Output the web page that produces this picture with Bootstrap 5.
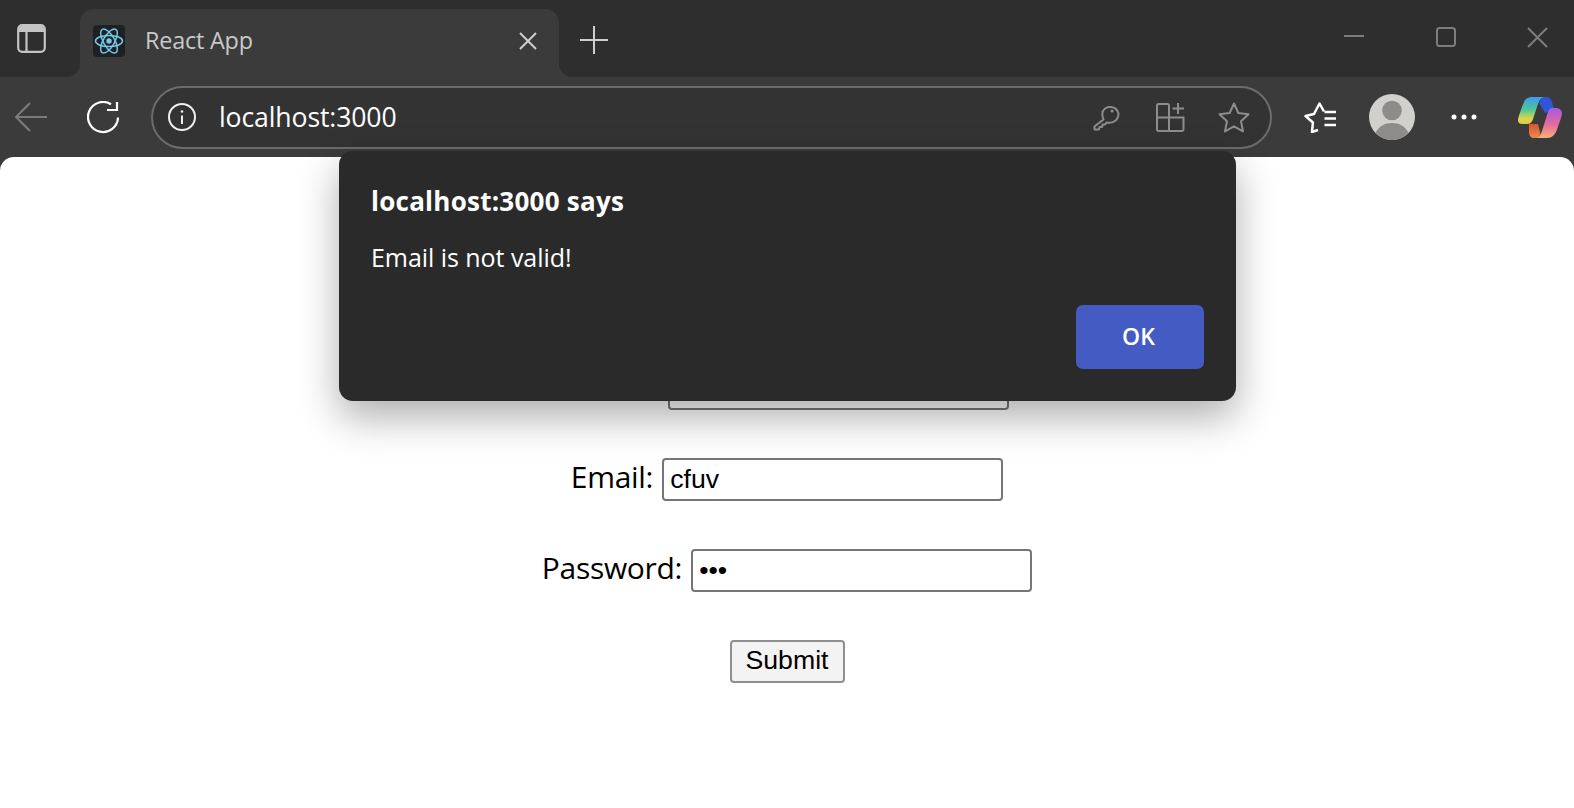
<!DOCTYPE html>
<html lang="en">
<head>
    <meta charset="UTF-8">
    <meta name="viewport" content="width=device-width, initial-scale=1.0">
    <title>React App</title>
    <link href="https://cdn.jsdelivr.net/npm/bootstrap@5.3.0/dist/css/bootstrap.min.css" rel="stylesheet">
    <style>
        html, body { height: 100%; overflow: hidden; }
        body { background: #3b3b3b; font-family: "Open Sans", "Noto Sans", sans-serif; }
        svg { display: block; flex: none; }

        .tab-strip { height: 77px; background: #2e2e2e; }
        .strip-panel { margin-left: 17px; margin-right: 34px; }
        .page-tab {
            position: relative; width: 479px; height: 68px; margin-top: 9px;
            padding: 0 22px 4px 13px;
            background: #3b3b3b; border-radius: 14px 14px 0 0;
        }
        .page-tab::before, .page-tab::after {
            content: ""; position: absolute; bottom: 0; width: 14px; height: 14px;
        }
        .page-tab::before { left: -14px; background: radial-gradient(circle at 0 0, transparent 14px, #3b3b3b 14.5px); }
        .page-tab::after { right: -14px; background: radial-gradient(circle at 100% 0, transparent 14px, #3b3b3b 14.5px); }
        .tab-favicon { width: 32px; height: 32px; border-radius: 4px; background: #1d2024; }
        .tab-title { margin-left: 20px; font-size: 23.4px; color: #c9c9c9; letter-spacing: -.2px; }
        .tab-plus { margin-left: 20px; padding-top: 2px; }
        .win-group { padding-top: 27px; }
        .win-min { margin-right: 72px; }
        .win-max { margin-right: 71px; }
        .win-close { margin-right: 26px; }

        .tool-strip { height: 80px; background: #3b3b3b; }
        .tool-back { margin-left: 14px; }
        .tool-reload { margin-left: 40px; }
        .url-bar {
            width: 1121px; height: 63px; margin-left: 32px; padding-left: 15px; padding-right: 20px;
            background: #333; border: 2px solid #6c6c6c; border-radius: 32px;
        }
        .url-text { margin-left: 23px; padding-top: 2px; font-size: 26.6px; color: #fff; letter-spacing: -.12px; }
        .url-apps { margin-left: 36px; margin-right: 33px; }
        .tool-favs { margin-left: 32px; }
        .tool-avatar { margin-left: 33px; }
        .tool-dots { margin-left: 36px; }
        .tool-copilot { margin-left: 41px; }

        .page-area {
            height: 651px; padding-top: 210px; background: #fff;
            border-radius: 14px 14px 0 0; color: #000;
        }
        .form-line { height: 43px; margin-bottom: 48px; }
        .form-label-text { margin-right: 9px; padding-bottom: 6px; font-size: 30px; line-height: 42px; letter-spacing: -.3px; }
        .form-label-name { letter-spacing: .3px; }
        .form-entry {
            width: 341px; height: 43px; padding: 0 6px; border: 2px solid #767676; border-radius: 4px;
            background: #fff; color: #000; font-family: "Liberation Sans", Arial, sans-serif; font-size: 26.67px;
            outline: none;
        }
        .form-submit {
            width: 115px; height: 43px; padding: 0 0 2px; border: 2px solid #8f8f8f; border-radius: 4px;
            background: #f3f3f3; color: #000; font-family: "Liberation Sans", Arial, sans-serif; font-size: 26.67px; line-height: 1;
        }

        .alert-box {
            position: absolute; left: 339px; top: 151px; width: 897px; height: 250px; padding: 32px;
            background: #2a2a2a; border-radius: 14px; color: #fff;
            box-shadow: 0 16px 40px rgba(0, 0, 0, .32);
        }
        .alert-title { margin-top: 2px; font-size: 26px; line-height: 32px; font-weight: 700; letter-spacing: .25px; }
        .alert-body { margin-top: 24px; font-size: 25px; line-height: 32px; letter-spacing: -.05px; }
        .alert-ok {
            width: 128px; height: 64px; padding: 0 3px 1px 0; border: 0; border-radius: 7px;
            background: #445bc4; color: #fff; font-size: 23px; font-weight: 600;
        }
    </style>
</head>
<body>
    <div class="tab-strip d-flex">
        <div class="strip-panel d-flex align-items-center">
            <svg width="29" height="29" viewBox="0 0 29 29" fill="none">
                <rect x="1.2" y="1.2" width="26.6" height="26.6" rx="4" stroke="#c4c4c4" stroke-width="2.2"/>
                <path d="M2 8V5a3 3 0 0 1 3-3h19a3 3 0 0 1 3 3v3z" fill="#c4c4c4"/>
                <path d="M9.5 8v19" stroke="#c4c4c4" stroke-width="2.2"/>
            </svg>
        </div>
        <div class="page-tab d-flex align-items-center">
            <div class="tab-favicon d-flex align-items-center justify-content-center">
                <svg width="30" height="30" viewBox="-15 -15 30 30" fill="none" stroke="#76c8e8" stroke-width="1.5">
                    <ellipse rx="13.5" ry="5.6"/>
                    <ellipse rx="13.5" ry="5.6" transform="rotate(60)"/>
                    <ellipse rx="13.5" ry="5.6" transform="rotate(120)"/>
                    <circle r="2.7" fill="#76c8e8" stroke="none"/>
                </svg>
            </div>
            <span class="tab-title">React App</span>
            <svg class="ms-auto" width="18" height="18" viewBox="0 0 18 18" stroke="#d0d0d0" stroke-width="2"><path d="M1 1l16 16M17 1L1 17"/></svg>
        </div>
        <div class="tab-plus d-flex align-items-center">
            <svg width="30" height="30" viewBox="0 0 30 30" stroke="#cfcfcf" stroke-width="2"><path d="M15 1v28M1 15h28"/></svg>
        </div>
        <div class="win-group ms-auto d-flex align-items-start">
            <svg class="win-min" width="20" height="20" viewBox="0 0 20 20" stroke="#7d7d7d" stroke-width="2"><path d="M0 9h20"/></svg>
            <svg class="win-max" width="20" height="20" viewBox="0 0 20 20" fill="none" stroke="#7d7d7d" stroke-width="2"><rect x="1" y="1" width="18" height="18" rx="2.5"/></svg>
            <svg class="win-close" width="21" height="21" viewBox="0 0 21 21" stroke="#7d7d7d" stroke-width="2"><path d="M1 1l19 19M20 1L1 20"/></svg>
        </div>
    </div>

    <div class="tool-strip d-flex align-items-center">
        <svg class="tool-back" width="33" height="30" viewBox="0 0 33 30" fill="none" stroke="#7b7b7b" stroke-width="2"><path d="M33 15H2M16 1L2 15l14 14"/></svg>
        <svg class="tool-reload" width="32" height="33" viewBox="0 0 32 33" fill="none" stroke="#fff" stroke-width="2.2"><path d="M24 3.300A15 15 0 1 0 31 16.500"/><path d="M20 9h10V1"/></svg>
        <div class="url-bar d-flex align-items-center">
            <svg width="28" height="28" viewBox="0 0 28 28" fill="none" stroke="#f0f0f0" stroke-width="2"><circle cx="14" cy="14" r="13"/><path d="M14 12.500V21"/><circle cx="14" cy="8.500" r="1.300" fill="#f0f0f0" stroke="none"/></svg>
            <span class="url-text">localhost:3000</span>
            <svg class="ms-auto" width="27" height="28" viewBox="0 0 27 28" fill="none" stroke="#8d8d8d" stroke-width="2" stroke-linejoin="round"><path d="M10.500 16.500L1.500 23.500v3h4.500l.6-2.500h2.500l.5-2.500h2.500l1.400-2c6.500 1.500 12-2.500 12-9A8.500 8.500 0 0 0 9.500 9c-.5 3 0 5.500 1 7.500z"/><circle cx="19" cy="8" r="1.500" fill="#8d8d8d" stroke="none"/></svg>
            <svg class="url-apps" width="29" height="29" viewBox="0 0 29 29" fill="none" stroke="#8d8d8d" stroke-width="2"><path d="M2.500 1h9a1.500 1.500 0 0 1 1.500 1.500V28H2.500A1.500 1.500 0 0 1 1 26.500v-24A1.500 1.500 0 0 1 2.500 1zM1 14.500h26.500V26.500a1.500 1.500 0 0 1-1.500 1.500H13M22 0v11M16.500 5.500h11.500"/></svg>
            <svg width="32" height="31" viewBox="0 0 32 31" fill="none" stroke="#8d8d8d" stroke-width="2" stroke-linejoin="round"><path d="M16 1.500l4.300 9.500 10.200 1.200-7.500 7 2 10.200L16 24.300 7 29.400l2-10.200-7.500-7L11.700 11z"/></svg>
        </div>
        <svg class="tool-favs" width="32" height="31" viewBox="0 0 32 31" fill="none" stroke="#fff" stroke-width="2.500" stroke-linejoin="round"><path d="M14 28l-6 2 .9-9.500L1.500 14l8.500-2L15.500 1.500 20 9.500"/><path d="M20.500 10H32M20.500 16.500H32M20.500 23H32"/></svg>
        <svg class="tool-avatar" width="46" height="46" viewBox="0 0 46 46"><circle cx="23" cy="23" r="23" fill="#d1d0cc"/><circle cx="23" cy="16.500" r="9.800" fill="#8d8c8a"/><path d="M6.500 39C10 32 16 29 23 29s13 3 16.500 10A23 23 0 0 1 6.500 39z" fill="#8d8c8a"/></svg>
        <svg class="tool-dots" width="26" height="6" viewBox="0 0 26 6" fill="#fff"><circle cx="3" cy="3" r="2.500"/><circle cx="13" cy="3" r="2.500"/><circle cx="23" cy="3" r="2.500"/></svg>
        <svg class="tool-copilot" width="44" height="41" viewBox="0 0 44 41">
            <defs>
                <linearGradient id="copA" x1="0" y1="0" x2="0" y2="1"><stop offset="0" stop-color="#3f9bf0"/><stop offset=".45" stop-color="#4cc59a"/><stop offset=".8" stop-color="#d6d84c"/><stop offset="1" stop-color="#ecc444"/></linearGradient>
                <linearGradient id="copB" x1="0" y1="0" x2="0" y2="1"><stop offset="0" stop-color="#a55be2"/><stop offset=".55" stop-color="#e66a9c"/><stop offset="1" stop-color="#f4b274"/></linearGradient>
                <linearGradient id="copC" x1="0" y1="0" x2="0" y2="1"><stop offset="0" stop-color="#d8542c"/><stop offset="1" stop-color="#f08a50"/></linearGradient>
            </defs>
            <path d="M21 6c1.500-4 4-6 7-6 3.500 0 5 2 6 5l2 7-9 4z" fill="#2f55d8"/>
            <path d="M11 27h9l2 8c.7 3-2 6-6 6-3 0-4.500-2-5-5z" fill="url(#copC)"/>
            <path d="M15 0h13c-4 0-6.500 2.500-8 7l-5 15c-1 3.500-3 5-6 5H4c-3 0-4.500-2-4-5 .5-2 3-10 6-17 1.500-3.500 4-5 9-5z" fill="url(#copA)"/>
            <path d="M34 11h4c4 0 6 2.500 6 5.500 0 2-2.500 9-5 16-2 5.500-5 8.500-10 8.500H16c4 0 6.500-2.500 8-7l5-16c1-3.500 2.500-7 5-7z" fill="url(#copB)"/>
        </svg>
    </div>

    <div class="page-area">
        <form class="d-flex flex-column align-items-center">
            <div class="form-line d-flex align-items-center">
                <label class="form-label-text form-label-name" for="nameField">Name:</label>
                <input class="form-entry" id="nameField" type="text">
            </div>
            <div class="form-line d-flex align-items-center">
                <label class="form-label-text" for="emailField">Email:</label>
                <input class="form-entry" id="emailField" type="text" value="cfuv">
            </div>
            <div class="form-line d-flex align-items-center">
                <label class="form-label-text" for="passField">Password:</label>
                <input class="form-entry" id="passField" type="password" value="abc">
            </div>
            <button class="form-submit" type="button">Submit</button>
        </form>
    </div>

    <div class="alert-box d-flex flex-column">
        <div class="alert-title">localhost:3000 says</div>
        <div class="alert-body">Email is not valid!</div>
        <div class="mt-auto d-flex justify-content-end">
            <button class="alert-ok" type="button">OK</button>
        </div>
    </div>

    <script src="https://cdn.jsdelivr.net/npm/bootstrap@5.3.0/dist/js/bootstrap.bundle.min.js"></script>
</body>
</html>
